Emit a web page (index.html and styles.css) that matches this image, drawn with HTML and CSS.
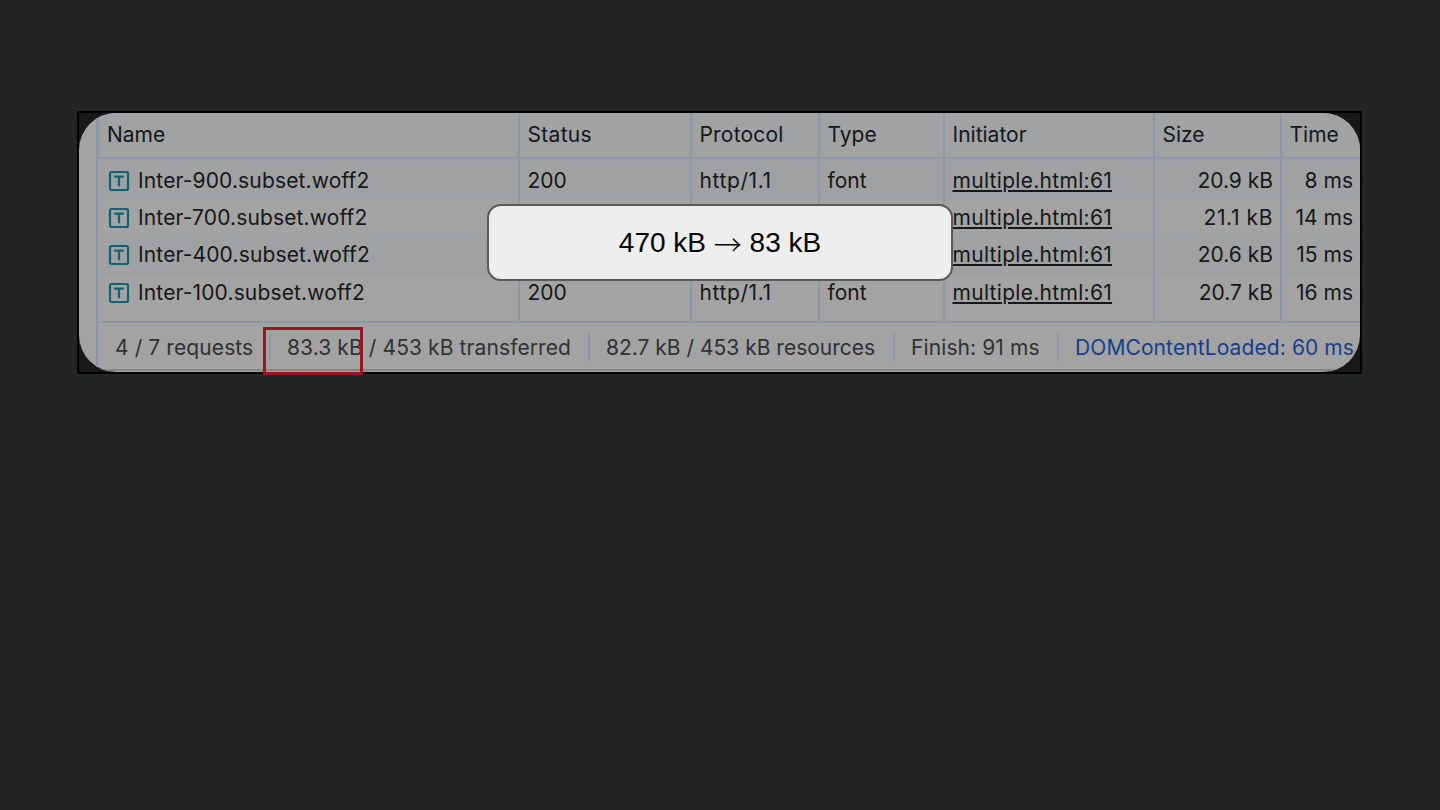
FILE: index.html
```
<!DOCTYPE html>
<html lang="en">

<head>
    <meta charset="UTF-8">
    <meta name="viewport" content="width=device-width, initial-scale=1.0">
    <title>Font subsetting</title>
    <link rel="stylesheet" href="styles.css">
</head>

<body>
    <svg class="sprite" width="0" height="0">
        <symbol id="font-icon" viewBox="0 0 22 22">
            <rect x="2" y="2" width="18" height="18" rx="1.5" fill="none" stroke="#136272" stroke-width="2.2" />
            <path d="M6.2 6.6h9.6M11 6.6v9.6" fill="none" stroke="#136272" stroke-width="2.2" />
        </symbol>
    </svg>

    <div class="frame">
        <div class="network">
            <!-- Column titles -->
            <div class="row head">
                <span class="name">Name</span>
                <span class="status">Status</span>
                <span class="protocol">Protocol</span>
                <span>Type</span>
                <span>Initiator</span>
                <span>Size</span>
                <span>Time</span>
            </div>

            <!-- Requests -->
            <div class="row odd first">
                <span class="name"><svg class="icon"><use href="#font-icon" /></svg><b>Inter-900.subset.woff2</b></span>
                <span>200</span>
                <span class="wide">http/1.1</span>
                <span>font</span>
                <span><a>multiple.html:61</a></span>
                <span class="num">20.9 kB</span>
                <span class="num">8 ms</span>
            </div>
            <div class="row">
                <span class="name"><svg class="icon"><use href="#font-icon" /></svg><b>Inter-700.subset.woff2</b></span>
                <span></span>
                <span></span>
                <span></span>
                <span><a>multiple.html:61</a></span>
                <span class="num wide">21.1 kB</span>
                <span class="num">14 ms</span>
            </div>
            <div class="row odd">
                <span class="name"><svg class="icon"><use href="#font-icon" /></svg><b>Inter-400.subset.woff2</b></span>
                <span></span>
                <span></span>
                <span></span>
                <span><a>multiple.html:61</a></span>
                <span class="num">20.6 kB</span>
                <span class="num">15 ms</span>
            </div>
            <div class="row last">
                <span class="name"><svg class="icon"><use href="#font-icon" /></svg><b>Inter-100.subset.woff2</b></span>
                <span>200</span>
                <span class="wide">http/1.1</span>
                <span>font</span>
                <span><a>multiple.html:61</a></span>
                <span class="num">20.7 kB</span>
                <span class="num">16 ms</span>
            </div>

            <!-- Totals -->
            <div class="summary">
                <span class="requests">4 / 7 requests</span>
                <span class="transferred">83.3 kB / 453 kB transferred</span>
                <span class="resources">82.7 kB / 453 kB resources</span>
                <span class="finish">Finish: 91 ms</span>
                <span class="loaded">DOMContentLoaded: 60 ms</span>
            </div>
        </div>
        <div class="highlight"></div>
        <div class="callout">470 kB <i>→</i> 83 kB</div>
    </div>
</body>

</html>
```

FILE: styles.css
```
* {
    box-sizing: border-box;
}

body {
    margin: 0;
    padding: 111px 77px 0;
    height: 100vh;
    overflow: hidden;
    background: #232524;
    font-family: Inter, "Liberation Sans", sans-serif;
    font-size: 21px;
    color: #161718;
}

.sprite {
    display: block;
}

.frame {
    position: relative;
    width: 1285px;
    height: 263px;
    border: 2px solid #000;
    background: #181818;
}

.network {
    height: 259px;
    padding-left: 17px;
    overflow: hidden;
    border-radius: 37px;
    background: #a3a3a3;
    white-space: nowrap;
}

/* Table */
.row {
    display: grid;
    grid-template-columns: 420px 172px 128px 125px 210px 127px 80px;
    height: 37.5px;
    line-height: 38px;
    border-left: 2px solid #8c98aa;
}

.row span {
    padding-left: 7.5px;
    border-left: 2px solid #8c98aa;
}

.row .name {
    display: flex;
    align-items: center;
    padding-left: 10px;
    border-left: 0;
}

.row b {
    font-weight: 400;
    margin-left: 8px;
    letter-spacing: 0.14px;
}

.row .num {
    padding-left: 0;
    padding-right: 7px;
    text-align: right;
}

.row .wide {
    letter-spacing: 0.6px;
}

.odd {
    background: #9fa1a3;
}

.head {
    grid-template-columns: 419px 172px 128px 125px 210px 127px 80px;
    height: 46px;
    line-height: 44px;
    border-left-width: 3px;
    border-bottom: 2px solid #8c98aa;
    background: #a0a2a4;
}

.head .name {
    padding-left: 8px;
}

.head .status {
    letter-spacing: 0.3px;
}

.head .protocol {
    letter-spacing: 0.2px;
}

.first {
    height: 39.5px;
}

.first span {
    padding-top: 3px;
}

.last {
    height: 47.5px;
}

.last .name {
    height: 38px;
}

.icon {
    width: 22px;
    height: 22px;
}

a {
    letter-spacing: 0.3px;
    text-decoration: underline;
    text-decoration-thickness: 2px;
    text-underline-offset: 2px;
}

/* Totals bar */
.summary {
    display: flex;
    height: 50px;
    padding-top: 10px;
    border-top: 2px solid #8c98aa;
    border-bottom: 2px solid #858886;
    border-left: 2px solid #8c98aa;
    color: #303132;
}

.summary span {
    height: 28px;
    line-height: 29px;
    padding-left: 16px;
    border-left: 2px solid #8c98aa;
    letter-spacing: 0.1px;
}

.summary .requests {
    width: 171px;
    padding-left: 17px;
    border-left: 0;
}

.summary .transferred {
    width: 319px;
}

.summary .resources {
    width: 305px;
    letter-spacing: 0;
}

.summary .finish {
    width: 164px;
}

.summary .loaded {
    color: #163f8b;
}

/* Overlays */
.highlight {
    position: absolute;
    left: 184px;
    top: 214px;
    width: 100px;
    height: 48px;
    border: 3px solid #9b1620;
}

.callout {
    position: absolute;
    left: 408px;
    top: 91px;
    width: 466px;
    height: 77px;
    border: 2px solid #595959;
    border-radius: 14px;
    background: #eee;
    color: #000;
    font-size: 28px;
    font-family: "Liberation Sans", sans-serif;
    line-height: 74px;
    text-align: center;
}

.callout i {
    font: 300 28px/1 "Noto Sans CJK JP", sans-serif;
    vertical-align: -4px;
}
```
